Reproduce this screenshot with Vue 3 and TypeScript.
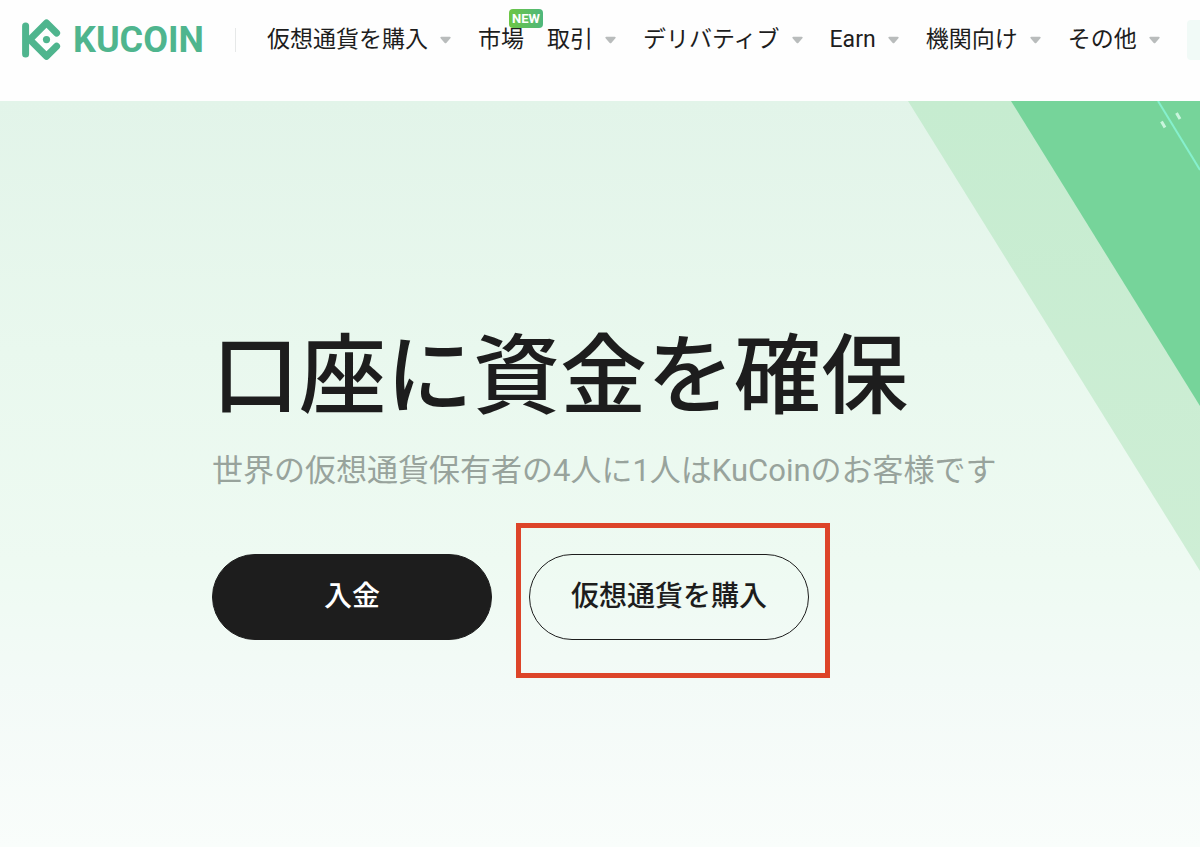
<script setup lang="ts">
interface NavItem {
  label: string
  menu: boolean
  badge?: string
}

const items: NavItem[] = [
  { label: '仮想通貨を購入', menu: true },
  { label: '市場', menu: false, badge: 'NEW' },
  { label: '取引', menu: true },
  { label: 'デリバティブ', menu: true },
  { label: 'Earn', menu: true },
  { label: '機関向け', menu: true },
  { label: 'その他', menu: true },
]
</script>

<template>
  <div class="page">
    <header class="header">
      <a class="brand" href="#">
        <svg class="mark" width="40" height="44" viewBox="0 0 40 44" aria-hidden="true">
          <g fill="none" stroke="#4fb58e" stroke-width="7" stroke-linecap="round" stroke-linejoin="round">
            <path d="M4.600 8v28" />
            <path d="M35.600 15 25.500 4.900 8.800 21.600l16.700 16.700 10.100-10.100" />
          </g>
          <circle cx="25.5" cy="21.600" r="3.600" fill="#4fb58e" />
        </svg>
        <span class="wordmark">KUCOIN</span>
      </a>
      <span class="divider"></span>
      <nav class="nav">
        <a
          v-for="item in items"
          :key="item.label"
          class="nav-item"
          :class="{ plain: !item.menu }"
          href="#"
        >
          <span>{{ item.label }}</span>
          <svg v-if="item.menu" class="caret" width="11" height="8" viewBox="0 0 11 8" aria-hidden="true">
            <path d="M1.200.8h8.600c.9 0 1.200.8.6 1.400L6.300 6.900c-.5.5-1.100.5-1.600 0L.6 2.200C.1 1.600.4.8 1.200.8z" fill="#b9bcbc" />
          </svg>
          <span v-if="item.badge" class="badge">{{ item.badge }}</span>
        </a>
      </nav>
      <button class="header-action" type="button" aria-label="ログイン"></button>
    </header>

    <main class="hero">
      <svg class="art" width="292" height="470" viewBox="0 0 292 470" aria-hidden="true">
        <defs>
          <linearGradient id="band" x1="0" y1="0" x2="0" y2="1">
            <stop offset="0" stop-color="#c6ecd0" />
            <stop offset="1" stop-color="#ceeed5" />
          </linearGradient>
        </defs>
        <path d="M0 0h292v470z" fill="url(#band)" />
        <path d="M103 0h189v305z" fill="#76d49a" />
        <path d="M250 0l42 69" stroke="#86f0cd" stroke-width="2" />
        <path d="M253.500 20.500l3.500 6M268.500 12l3.500 6" stroke="#c9f5dd" stroke-width="3" />
      </svg>
      <div class="content">
        <h1 class="title">口座に資金を確保</h1>
        <p class="subtitle">世界の仮想通貨保有者の4人に1人はKuCoinのお客様です</p>
        <div class="actions">
          <button class="pill solid" type="button">入金</button>
          <div class="marked">
            <button class="pill outline" type="button">仮想通貨を購入</button>
            <span class="frame"></span>
          </div>
        </div>
      </div>
    </main>
  </div>
</template>

<style>
body {
  margin: 0;
}
</style>

<style scoped>
.page {
  display: flex;
  flex-direction: column;
  min-height: 100vh;
  overflow: hidden;
  background: #fff;
  color: #1d1d1d;
  font-family: Roboto, "Noto Sans CJK JP", sans-serif;
}

.header {
  display: flex;
  align-items: center;
  height: 79px;
  padding: 0 0 22px 21px;
  background: #fefefe;
}

.brand {
  display: flex;
  flex: none;
  align-items: center;
  gap: 12px;
  color: #4fb58e;
  text-decoration: none;
}

.mark {
  display: block;
}

.wordmark {
  font-size: 36px;
  font-weight: 700;
  line-height: 40px;
}

.divider {
  flex: none;
  width: 1px;
  height: 24px;
  margin: 0 31px;
  background: #e6e8e8;
}

.nav {
  display: flex;
  flex: none;
  gap: 27px;
}

.nav-item {
  position: relative;
  display: flex;
  align-items: center;
  gap: 12px;
  color: #1d1d1d;
  font-size: 23px;
  line-height: 36px;
  text-decoration: none;
  white-space: nowrap;
}

.nav-item.plain {
  margin-right: -4px;
}

.caret {
  display: block;
}

.badge {
  position: absolute;
  top: -13px;
  left: 31px;
  width: 34px;
  border-radius: 4px;
  background: linear-gradient(90deg, #6cc644, #4fb77c);
  color: #fff;
  font-size: 13px;
  font-weight: 700;
  line-height: 19px;
  text-align: center;
}

.header-action {
  flex: none;
  width: 120px;
  height: 40px;
  margin-left: 27px;
  border: 0;
  border-radius: 4px;
  background: #f1faf7;
}

.hero {
  position: relative;
  flex: 1;
  background: linear-gradient(180deg, #e2f4e9 0, #e9f8ee 250px, #eefaf2 460px, #f3faf7 580px, #f9fdfb 746px);
}

.art {
  position: absolute;
  top: 0;
  right: 0;
}

.content {
  position: relative;
  padding: 216px 24px 80px 212px;
}

.title {
  margin: 0;
  font-size: 87px;
  font-weight: 500;
  line-height: 120px;
}

.subtitle {
  margin: 10px 0 0;
  color: #98a39c;
  font-size: 31px;
  font-weight: 400;
  line-height: 48px;
}

.actions {
  display: flex;
  gap: 37px;
  margin-top: 59px;
}

.pill {
  display: block;
  width: 280px;
  height: 86px;
  padding: 0;
  border: 1px solid #1d1d1d;
  border-radius: 43px;
  font-family: inherit;
  font-size: 28px;
  font-weight: 500;
  line-height: 40px;
}

.solid {
  background: #1d1d1d;
  color: #fff;
}

.outline {
  background: transparent;
  color: #1d1d1d;
}

.marked {
  position: relative;
}

.frame {
  position: absolute;
  inset: -31px -21px -38px -13px;
  border: 5px solid #dd4429;
  pointer-events: none;
}
</style>
